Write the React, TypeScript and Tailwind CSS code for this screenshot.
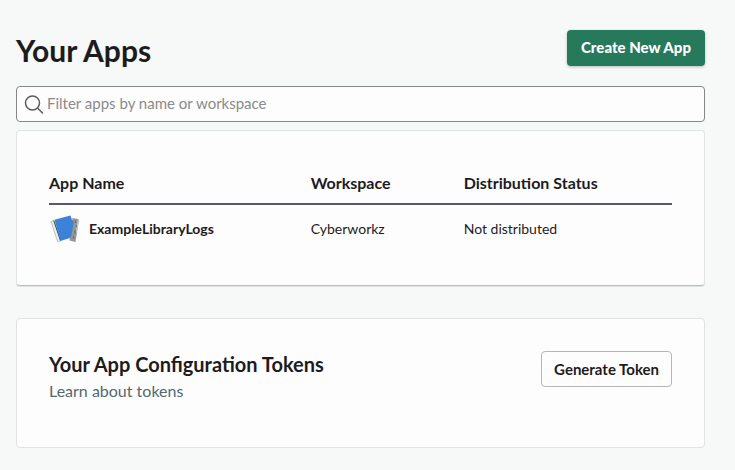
import React from "react";

type AppRow = { name: string; workspace: string; status: string };

const apps: AppRow[] = [
  { name: "ExampleLibraryLogs", workspace: "Cyberworkz", status: "Not distributed" },
];

function SearchIcon() {
  return (
    <svg className="h-5 w-5 shrink-0" viewBox="0 0 20 20" fill="none" stroke="#5c5d5f" strokeWidth="1.5" strokeLinecap="round" aria-hidden="true">
      <circle cx="8.5" cy="9" r="7" />
      <path d="M13.7 14.2L18.5 19" />
    </svg>
  );
}

function BookIcon() {
  return (
    <svg className="h-8 w-8 shrink-0" viewBox="0 0 32 32" aria-hidden="true">
      <path d="M23.5 5L30 6.2L26.5 29L20.5 27.5Z" fill="#939596" />
      <path d="M28.8 6.2L30 6.4L28 20L26.8 19Z" fill="#c4c6c7" />
      <path d="M26.5 7.5V10M27.4 12V14M26 17V21M24.6 23V25.5" stroke="#686b6c" strokeWidth="1" />
      <path d="M2 8.5L5 7.2L12 27.5L8.8 29Z" fill="#eef1f0" stroke="#a9b2b0" strokeWidth="0.8" />
      <path d="M4.8 7.8L11.4 27.6" stroke="#2f4f45" strokeWidth="1" />
      <path d="M5.5 6.8L21.5 2.4L22.8 6.5L24.8 9L22.5 22L21 25L11.5 28Z" fill="#3b82d8" />
    </svg>
  );
}

export default function App() {
  return (
    <main className="min-h-screen bg-[#f7f8f8] pt-[30px] pr-[30px] pb-[22px] pl-4 font-['Lato',sans-serif] text-[#1d1c1d]">
      <header className="flex h-9 items-center justify-between">
        <h1 className="pt-1 text-[30px] leading-9 font-bold">Your Apps</h1>
        <button type="button" className="h-9 rounded bg-[#26795b] px-3.5 pb-0.5 text-[15px] font-black text-white shadow-[0_1px_3px_rgba(0,0,0,0.25)]">
          Create New App
        </button>
      </header>

      <label className="mt-5 flex h-9 items-center gap-[3px] rounded border border-[#868686] bg-[#fdfdfd] px-[7px] focus-within:border-[#1264a3]">
        <SearchIcon />
        <input
          type="text"
          aria-label="Filter apps by name or workspace"
          placeholder="Filter apps by name or workspace"
          className="min-w-0 flex-1 bg-transparent pb-0.5 text-[15px] outline-none placeholder:text-[#8a8b8b]"
        />
      </label>

      <section className="mt-2 rounded border border-[#dfe3e3] border-b-[#b9bfbf] bg-[#fdfdfd] px-8 pt-8 pb-[33px] shadow-[0_1px_0_#dfe3e3]">
        <table className="w-full table-fixed text-left text-sm">
          <colgroup>
            <col className="w-[42%]" />
            <col className="w-[153px]" />
            <col />
          </colgroup>
          <thead>
            <tr className="h-[41px] border-b-2 border-[#5a5b60] text-base">
              <th className="font-bold">App Name</th>
              <th className="font-bold">Workspace</th>
              <th className="font-bold">Distribution Status</th>
            </tr>
          </thead>
          <tbody>
            {apps.map((app) => (
              <tr key={app.name} className="h-12">
                <td>
                  <div className="flex items-center gap-2">
                    <BookIcon />
                    <span className="font-bold">{app.name}</span>
                  </div>
                </td>
                <td>{app.workspace}</td>
                <td>{app.status}</td>
              </tr>
            ))}
          </tbody>
        </table>
      </section>

      <section className="mt-8 flex items-start justify-between rounded border border-[#dfe3e3] bg-[#fdfdfd] px-8 pt-8 pb-11">
        <div>
          <h2 className="text-xl leading-[26px] font-bold">Your App Configuration Tokens</h2>
          <a href="#tokens" className="mt-0.5 block text-base leading-6 text-[#52686f] hover:underline">
            Learn about tokens
          </a>
        </div>
        <button type="button" className="h-9 rounded border border-[#b5b6b6] bg-[#fdfdfd] px-3 text-[15px] font-bold">
          Generate Token
        </button>
      </section>
    </main>
  );
}
